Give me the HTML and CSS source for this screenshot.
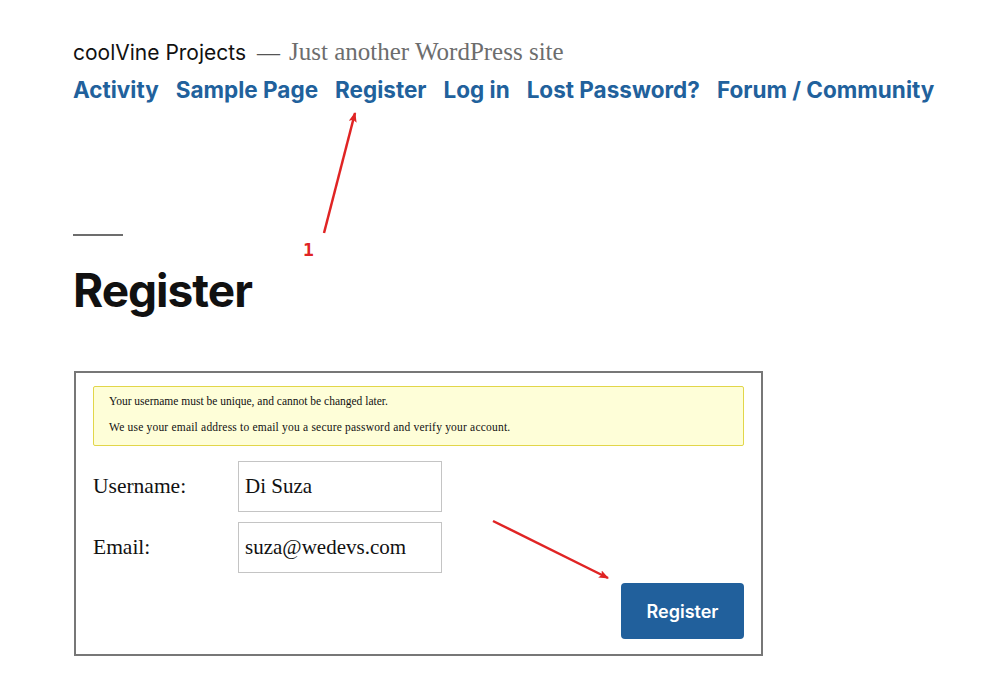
FILE: index.html
```html
<!DOCTYPE html>
<html lang="en">
<head>
<meta charset="utf-8">
<title>Register – coolVine Projects</title>
<link rel="stylesheet" href="styles.css">
</head>
<body>
<div class="page">
  <header class="site-header">
    <div class="branding">
      <span class="site-title">coolVine Projects</span>
      <span class="dash">—</span>
      <span class="tagline">Just another WordPress site</span>
    </div>
    <nav class="nav">
      <a href="#">Activity</a>
      <a href="#">Sample Page</a>
      <a href="#">Register</a>
      <a href="#">Log in</a>
      <a href="#">Lost Password?</a>
      <a href="#">Forum / Community</a>
    </nav>
  </header>
  <main class="content">
    <hr class="sep">
    <h1 class="title">Register</h1>
    <form class="reg-form">
      <div class="notice">
        <p>Your username must be unique, and cannot be changed later.</p>
        <p>We use your email address to email you a secure password and verify your account.</p>
      </div>
      <div class="row">
        <label class="label">Username:</label>
        <input class="field" type="text" value="Di Suza">
      </div>
      <div class="row">
        <label class="label">Email:</label>
        <input class="field" type="text" value="suza@wedevs.com">
      </div>
      <div class="actions">
        <button type="button" class="btn">Register</button>
      </div>
    </form>
  </main>
  <svg class="annot" width="981" height="700" viewBox="0 0 981 700">
    <defs>
      <marker id="ah" markerWidth="10" markerHeight="8" refX="9" refY="4" orient="auto" markerUnits="userSpaceOnUse">
        <path d="M0,0 L10,4 L0,8 L2,4 Z" fill="#e02424"/>
      </marker>
    </defs>
    <line x1="324" y1="233" x2="355" y2="113" stroke="#e02424" stroke-width="2.5" marker-end="url(#ah)"/>
    <line x1="493" y1="521" x2="608" y2="578" stroke="#e02424" stroke-width="2.5" marker-end="url(#ah)"/>
    <text x="303" y="256" class="annot-num">1</text>
  </svg>
</div>
</body>
</html>
```
FILE: styles.css
```css
* { box-sizing: border-box; }
html, body { margin: 0; padding: 0; background: #fff; }
body { font-family: Inter, "Liberation Sans", sans-serif; color: #111; }
.page { position: relative; width: 981px; height: 700px; overflow: hidden; padding: 38px 0 0 73px; }
.branding { display: flex; align-items: baseline; gap: 0; height: 28px; }
.site-title { font-family: Inter, sans-serif; font-size: 21px; letter-spacing: 0; color: #111; }
.dash { font-family: "Liberation Serif", serif; font-size: 23px; color: #555; margin: 0 9px 0 11px; }
.tagline { font-family: "Liberation Serif", serif; font-size: 25px; color: #6d6d6d; }
.nav { display: flex; gap: 17px; margin-top: 10px; }
.nav a { font-family: Inter, sans-serif; font-weight: 700; font-size: 22.5px; letter-spacing: 0; color: #21619c; text-decoration: none; line-height: 28px; }
.content { padding-top: 130px; }
.sep { width: 50px; height: 2px; border: 0; margin: 0; background: #6d6d6d; }
.title { font-family: Inter, sans-serif; font-weight: 700; font-size: 46px; letter-spacing: -1px; margin: 26px 0 0; line-height: 56px; color: #111; }
.reg-form { width: 689px; margin: 53px 0 0 1px; border: 2px solid #777; padding: 13px 17px 15px 17px; }
.notice { background: #fefed8; border: 1px solid #e2d64a; border-radius: 2px; padding: 1px 15px 5px; font-family: "Liberation Serif", serif; font-size: 11.5px; color: #111; }
.notice p { margin: 0; line-height: 26px; }
.notice p + p { letter-spacing: 0.2px; }
.row { display: flex; align-items: center; margin-top: 15px; }
.row + .row { margin-top: 10px; }
.label { width: 145px; font-family: "Liberation Serif", serif; font-size: 21.5px; color: #111; }
.field { width: 204px; height: 51px; border: 1px solid #c4c4c4; padding: 0 6px; font-family: "Liberation Serif", serif; font-size: 21px; color: #111; background: #fff; outline: none; }
.actions { display: flex; justify-content: flex-end; margin-top: 10px; }
.btn { width: 123px; height: 56px; background: #21609c; color: #fff; border: 0; border-radius: 4px; font-family: Inter, sans-serif; font-weight: 600; font-size: 18px; }
.annot { position: absolute; left: 0; top: 0; pointer-events: none; }
.annot-num { font-family: "DejaVu Sans Mono", monospace; font-weight: 700; font-size: 18px; fill: #e02424; }
```
